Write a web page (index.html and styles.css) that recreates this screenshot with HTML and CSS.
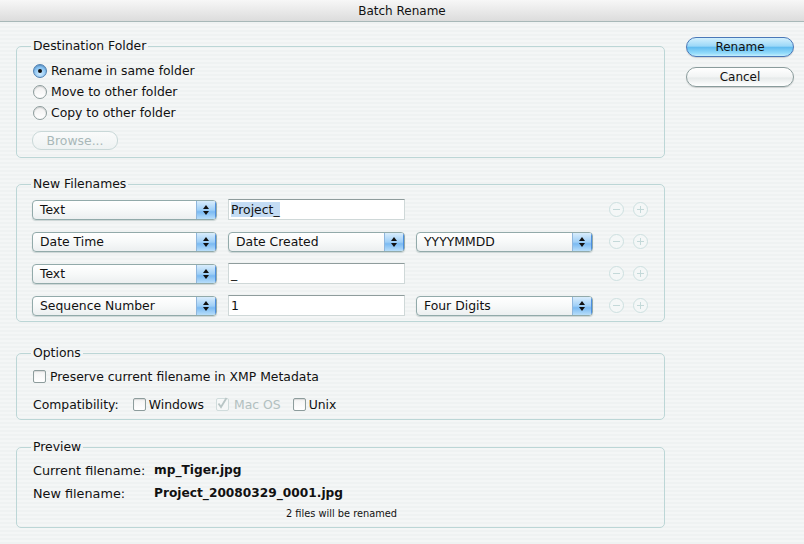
FILE: index.html
```html
<!DOCTYPE html>
<html>
<head>
<meta charset="utf-8">
<title>Batch Rename</title>
<link rel="stylesheet" href="styles.css">
</head>
<body>
<div class="window">
  <div class="titlebar">Batch Rename</div>
  <div class="content">
    <div class="main">
      <fieldset class="group g-dest">
        <legend>Destination Folder</legend>
        <div class="inner">
          <div class="opt-row"><span class="radio on"></span><span>Rename in same folder</span></div>
          <div class="opt-row"><span class="radio"></span><span>Move to other folder</span></div>
          <div class="opt-row"><span class="radio"></span><span>Copy to other folder</span></div>
          <div class="browse">Browse...</div>
        </div>
      </fieldset>

      <fieldset class="group g-names">
        <legend>New Filenames</legend>
        <div class="inner rows">
          <div class="name-row">
            <div class="select s1"><span class="val">Text</span><span class="arrows"><svg width="8" height="12" viewBox="0 0 8 12"><path d="M4 1 L7 5 H1 Z M4 11 L7 7 H1 Z" fill="#111"/></svg></span></div>
            <div class="field"><span class="sel">Project_</span></div>
            <div class="spacer"></div>
            <div class="pm"><span class="circ minus"></span><span class="circ plus"></span></div>
          </div>
          <div class="name-row">
            <div class="select s1"><span class="val">Date Time</span><span class="arrows"><svg width="8" height="12" viewBox="0 0 8 12"><path d="M4 1 L7 5 H1 Z M4 11 L7 7 H1 Z" fill="#111"/></svg></span></div>
            <div class="select s2"><span class="val">Date Created</span><span class="arrows"><svg width="8" height="12" viewBox="0 0 8 12"><path d="M4 1 L7 5 H1 Z M4 11 L7 7 H1 Z" fill="#111"/></svg></span></div>
            <div class="select s3"><span class="val">YYYYMMDD</span><span class="arrows"><svg width="8" height="12" viewBox="0 0 8 12"><path d="M4 1 L7 5 H1 Z M4 11 L7 7 H1 Z" fill="#111"/></svg></span></div>
            <div class="pm"><span class="circ minus"></span><span class="circ plus"></span></div>
          </div>
          <div class="name-row">
            <div class="select s1"><span class="val">Text</span><span class="arrows"><svg width="8" height="12" viewBox="0 0 8 12"><path d="M4 1 L7 5 H1 Z M4 11 L7 7 H1 Z" fill="#111"/></svg></span></div>
            <div class="field"><span>_</span></div>
            <div class="spacer"></div>
            <div class="pm"><span class="circ minus"></span><span class="circ plus"></span></div>
          </div>
          <div class="name-row">
            <div class="select s1"><span class="val">Sequence Number</span><span class="arrows"><svg width="8" height="12" viewBox="0 0 8 12"><path d="M4 1 L7 5 H1 Z M4 11 L7 7 H1 Z" fill="#111"/></svg></span></div>
            <div class="field"><span>1</span></div>
            <div class="select s3"><span class="val">Four Digits</span><span class="arrows"><svg width="8" height="12" viewBox="0 0 8 12"><path d="M4 1 L7 5 H1 Z M4 11 L7 7 H1 Z" fill="#111"/></svg></span></div>
            <div class="pm"><span class="circ minus"></span><span class="circ plus"></span></div>
          </div>
        </div>
      </fieldset>

      <fieldset class="group g-opts">
        <legend>Options</legend>
        <div class="inner">
          <div class="opt-row first"><span class="check"></span><span>Preserve current filename in XMP Metadata</span></div>
          <div class="compat-row">
            <span class="compat-label">Compatibility:</span>
            <span class="check"></span><span class="cl c-win">Windows</span>
            <span class="check checked disabled"><svg width="13" height="13" viewBox="0 0 13 13"><path d="M2.5 6.5 L5 10 L10.5 1" fill="none" stroke="#b9c6c6" stroke-width="1.8"/></svg></span><span class="cl c-mac dim">Mac OS</span>
            <span class="check"></span><span class="cl c-unix">Unix</span>
          </div>
        </div>
      </fieldset>

      <fieldset class="group g-prev">
        <legend>Preview</legend>
        <div class="inner">
          <div class="prev-row"><span class="plabel">Current filename:</span><span class="pval">mp_Tiger.jpg</span></div>
          <div class="prev-row second"><span class="plabel">New filename:</span><span class="pval">Project_20080329_0001.jpg</span></div>
          <div class="count">2 files will be renamed</div>
        </div>
      </fieldset>
    </div>
    <div class="side">
      <div class="btn primary">Rename</div>
      <div class="btn">Cancel</div>
    </div>
  </div>
</div>
</body>
</html>
```

FILE: styles.css
```css
* { box-sizing: border-box; }
html, body { margin: 0; padding: 0; }
body {
  width: 804px;
  height: 544px;
  overflow: hidden;
  font-family: "DejaVu Sans", "Liberation Sans", sans-serif;
  font-size: 12.4px;
  color: #111;
  background: #f3f5f5;
}
.window {
  width: 804px;
  height: 544px;
  background: repeating-linear-gradient(to bottom, #f4f6f6 0px, #f4f6f6 2px, #eff2f2 2px, #eff2f2 4px);
}
.titlebar {
  height: 22px;
  line-height: 22px;
  text-align: center;
  font-size: 12px;
  color: #111;
  background: linear-gradient(to bottom, #f7f7f7, #dcdcdc);
  border-bottom: 1px solid #a8b8b8;
}
.content {
  display: flex;
  padding: 16px 10px 0 16px;
  gap: 21px;
}
.main {
  width: 649px;
  display: flex;
  flex-direction: column;
}
.side {
  width: 108px;
  margin-top: -1px;
  display: flex;
  flex-direction: column;
  gap: 10px;
}
.group {
  margin: 0;
  padding: 0 14px;
  border: 1px solid #bcd6d6;
  border-radius: 5px;
  min-width: 0;
}
.group legend {
  padding: 0 2px;
  line-height: 16px;
  height: 16px;
  font-size: 12.4px;
}
.g-names { margin-top: 18px; }
.g-opts { margin-top: 23px; }
.g-prev { margin-top: 19px; }

.g-dest .inner { padding: 6px 0 7px 2px; }
.opt-row {
  height: 21px;
  display: flex;
  align-items: center;
  gap: 4px;
}
.radio {
  width: 14px;
  height: 14px;
  border-radius: 50%;
  border: 1px solid #8d9c9c;
  background: linear-gradient(to bottom, #f0f0f0, #ffffff);
  box-shadow: inset 0 1px 1px rgba(0,0,0,0.15);
  display: inline-flex;
  align-items: center;
  justify-content: center;
  flex: none;
}
.radio.on {
  border-color: #4f7fb0;
  background: radial-gradient(circle at 50% 70%, #d2ecff 0%, #85c0f0 60%, #5a9ad8 100%);
}
.radio.on::after {
  content: "";
  width: 4px;
  height: 4px;
  border-radius: 50%;
  background: #111;
}
.browse {
  margin-top: 8px;
  margin-left: -1px;
  width: 86px;
  height: 19px;
  line-height: 17px;
  text-align: center;
  color: #a9b8b8;
  border: 1px solid #c9d8d8;
  border-radius: 9px;
  background: linear-gradient(to bottom, #fafbfb, #eef2f2);
}

.rows { padding: 7px 0 5px 1px; display: flex; flex-direction: column; gap: 11px; }
.name-row {
  display: flex;
  align-items: center;
  height: 21px;
  gap: 11px;
}
.select {
  height: 20px;
  display: flex;
  border: 1px solid #92aaaa;
  border-radius: 4px;
  background: linear-gradient(to bottom, #ffffff 0%, #f7f9f9 50%, #eceff0 100%);
  box-shadow: 0 1px 1px rgba(80,110,110,0.25);
  overflow: hidden;
}
.select .val {
  flex: 1;
  padding-left: 7px;
  line-height: 18px;
  white-space: nowrap;
}
.select .arrows {
  width: 20px;
  display: flex;
  align-items: center;
  justify-content: center;
  background: linear-gradient(to bottom, #d9edfc 0%, #9fcff7 50%, #7bbaf2 60%, #b8defa 100%);
  border-left: 1px solid #8fb6dc;
  border-right: 1px solid #4d8fe0;
}
.s1 { width: 185px; }
.s2 { width: 177px; }
.s3 { width: 177px; }
.spacer { width: 177px; }
.field {
  width: 177px;
  height: 21px;
  background: #fff;
  border: 1px solid #cfd8d8;
  border-top-color: #8f9c9c;
  padding-left: 2px;
  line-height: 19px;
}
.field .sel { background: #c4dcf4; }
.pm {
  display: flex;
  gap: 9px;
  margin-left: 5px;
}
.circ {
  width: 15px;
  height: 15px;
  border-radius: 50%;
  border: 1px solid #cde0e0;
  position: relative;
  background: #f4f7f7;
}
.circ::before {
  content: "";
  position: absolute;
  left: 3px;
  right: 3px;
  top: 6px;
  height: 1px;
  background: #c4d9d9;
}
.plus::after {
  content: "";
  position: absolute;
  top: 3px;
  bottom: 3px;
  left: 6px;
  width: 1px;
  background: #c4d9d9;
}

.g-opts .inner { padding: 6px 0 6px 2px; }
.g-opts .opt-row { height: 18px; }
.check {
  width: 13px;
  height: 13px;
  border: 1px solid #8d9c9c;
  border-radius: 2px;
  background: linear-gradient(to bottom, #f4f4f4, #ffffff);
  box-shadow: inset 0 1px 1px rgba(0,0,0,0.12);
  display: inline-flex;
  flex: none;
}
.check.disabled {
  border-color: #d0dcdc;
  box-shadow: none;
  background: #f6f8f8;
  overflow: visible;
}
.check svg { margin: -2px 0 0 -1px; overflow: visible; }
.compat-row {
  margin-top: 10px;
  height: 18px;
  display: flex;
  align-items: center;
}
.compat-label { margin-right: 14px; }
.cl { margin-left: 3px; margin-right: 12px; }
.c-mac { margin-left: 5px; }
.dim { color: #b2c0c0; }

.g-prev .inner { padding: 6px 0 6px 2px; }
.prev-row {
  height: 18px;
  display: flex;
  align-items: center;
}
.prev-row.second { margin-top: 5px; }
.plabel { width: 121px; font-size: 12.8px; }
.pval { font-weight: bold; font-size: 12.2px; }
.count {
  margin-top: 5px;
  height: 14px;
  line-height: 14px;
  font-size: 9.8px;
  text-align: center;
}

.btn {
  height: 20px;
  line-height: 18px;
  text-align: center;
  border-radius: 10px;
  border: 1px solid #8a9c9c;
  background: linear-gradient(to bottom, #ffffff 0%, #f2f4f4 50%, #e6eaea 55%, #ffffff 100%);
  box-shadow: 0 1px 1px rgba(0,0,0,0.15);
  font-size: 12px;
}
.btn.primary {
  border-color: #4a78b8;
  background: linear-gradient(to bottom, #d2f0fd 0%, #9cd8f8 45%, #62bcf0 52%, #94dcfb 85%, #c4eefd 100%);
}
```
